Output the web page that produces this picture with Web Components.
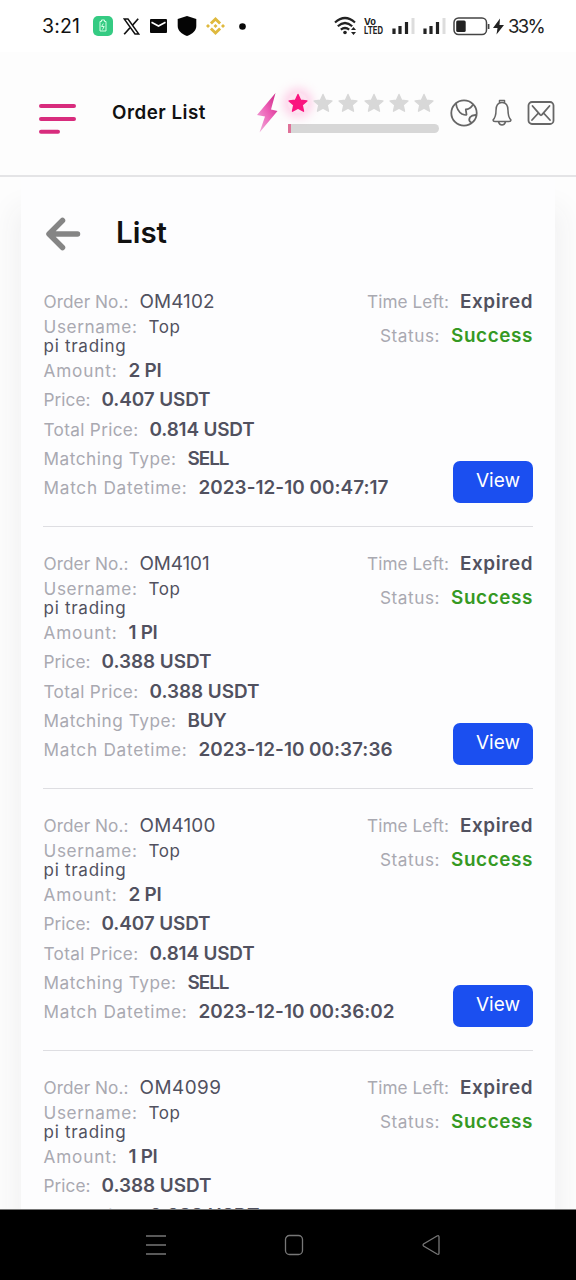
<!DOCTYPE html>
<html lang="en"><head><meta charset="utf-8"><title>Order List</title>
<style>html,body{margin:0;height:100%;overflow:hidden}body{font-family:Inter,"Open Sans",sans-serif;background:#fdfdfd}</style></head>
<body><order-app></order-app>
<script>
const define=(name,html,setup)=>customElements.define(name,class extends HTMLElement{
  connectedCallback(){
    if(this.shadowRoot)return;
    this.attachShadow({mode:'open'}).innerHTML=html;
    if(setup)setup(this,this.shadowRoot);
  }
});

/* One line of text whose tracking is adjusted to fill the width given in "w". */
customElements.define('track-text',class extends HTMLElement{
  connectedCallback(){
    if(this.shadowRoot)return;
    const r=this.attachShadow({mode:'open'});
    r.innerHTML='<style>:host{display:block;flex:none;white-space:pre}span{display:inline-block}</style><span><slot></slot></span>';
    const s=r.querySelector('span'),w=+this.getAttribute('w');
    this.style.width=w+'px';
    s.style.letterSpacing=(w-s.getBoundingClientRect().width)/this.textContent.length+'px';
  }
});

define('status-bar',`<style>
:host{display:flex;align-items:center;height:52px;background:#fff;color:#111;box-sizing:border-box;padding:0 32px 0 42px;font-size:19.5px}
svg{display:block;flex:none}.r{margin-left:auto;display:flex;align-items:center;color:#222}</style>
<track-text w="38">3:21</track-text>
<svg style="margin-left:13px" width="20" height="20" viewBox="0 0 20 20"><rect width="20" height="20" rx="5" fill="#35cb83"/><path d="M7 5.500h1.500v-1.500h3v1.500H13v9.500H7zM10.300 7.500l-1.700 3h2.600l-1.700 3" fill="none" stroke="#d4ffe4" stroke-width="1"/></svg>
<svg style="margin-left:10px" width="17" height="17" viewBox="0 0 17 17"><path d="M1.200 1h3.800l10.800 15h-3.800z" fill="#fff" stroke="#111" stroke-width="1.500"/><path d="M15.200.7 9.500 7.200M7 9.700 1.200 16.300" stroke="#111" stroke-width="1.700"/></svg>
<svg style="margin-left:10px" width="17" height="14" viewBox="0 0 17 14"><rect width="17" height="14" rx="1" fill="#080808"/><path d="m1.500 3.200 7 3.800 7-3.800" fill="none" stroke="#fff" stroke-width="1.600"/></svg>
<svg style="margin-left:10px" width="20" height="20" viewBox="0 0 20 20"><path d="M10 0 19.300 3v7c0 4.800-4 8.200-9.300 10C4.700 18.200.7 14.800.7 10V3z" fill="#050505"/></svg>
<svg style="margin-left:9px" width="19" height="20" viewBox="0 0 19 20"><g fill="#dfb93e"><path d="m9.500 1 5.600 5.600-2 2-3.600-3.500-3.600 3.500-2-2zM9.500 19l5.600-5.600-2-2-3.600 3.500-3.600-3.500-2 2zM9.500 8l2 2-2 2-2-2zM2 8l2 2-2 2-2-2zM17 8l2 2-2 2-2-2z"/></g></svg>
<svg style="margin-left:14px" width="7" height="7"><circle cx="3.500" cy="3.500" r="3.300" fill="#080808"/></svg>
<div class="r">
<svg width="24" height="20" viewBox="0 0 24 20"><g fill="none" stroke="#222" stroke-width="2.200"><path d="M1 6.500q10-9 20 0M3.800 10.200q7.200-6.400 14.400 0M6.800 13.700q4.200-3.400 8.400 0"/></g><circle cx="11" cy="16.500" r="1.800" fill="#222"/><path d="m17 14 2.500-3 2.500 3zM17 16h5l-2.500 3z" fill="#222"/></svg>
<svg style="margin-left:6px;overflow:visible" width="20" height="20" viewBox="0 0 20 20" font-family="Inter,sans-serif" font-weight="700" fill="#222"><text x="0" y="8.500" font-size="9.500" textLength="12" lengthAdjust="spacingAndGlyphs">Vo</text><text x="0" y="17.500" font-size="10" textLength="19" lengthAdjust="spacingAndGlyphs">LTED</text></svg>
<svg style="margin-left:8px" width="54" height="18" viewBox="0 0 54 18"><path d="M2 17v-5.500M8 17v-8M14.500 17v-12M33 17v-5.500M39 17v-8M45.500 17v-12" stroke="#222" stroke-width="3.200"/><path d="M21 17V1M52 17V1" stroke="#ddd" stroke-width="3"/></svg>
<svg style="margin-left:7px" width="37" height="19" viewBox="0 0 37 19"><rect x="1" y="1" width="32.500" height="16.500" rx="4.500" fill="none" stroke="#444" stroke-width="1.500"/><rect x="3.200" y="3.500" width="9.500" height="11.500" rx="1.500" fill="#222"/><path d="M35.600 7v5" stroke="#444" stroke-width="1.700"/></svg>
<svg style="margin:0 4px 0 3px" width="11" height="17" viewBox="0 0 11 17"><path d="M7 .5 0 10h4.500L3.500 16.500 11 7H6.500z" fill="#222"/></svg>
<track-text w="36" style="font-size:18.500px">33%</track-text></div>`);

define('star-rating',`<style>:host{display:block;width:151px}.s{display:flex;gap:5.200px;height:20px}svg{display:block;overflow:visible}
.on{border-radius:50%;box-shadow:0 0 10px 5px #ff9fd170;background:#ffa8d650}
.b{height:9px;margin-top:10.500px;background:linear-gradient(90deg,#df7299 3px,#d7d7d7 3px);border-radius:0 5px 5px 0}</style><div class="s"></div><div class="b"></div>`,
(h,r)=>{r.querySelector('.s').innerHTML=Array.from({length:6},(_,i)=>`<svg ${i?'':'class="on"'} width="20" height="20" viewBox="0 0 20 20"><path d="m10 1.500 2.600 5.700 6.300.7-4.700 4.200 1.300 6.100-5.500-3.100-5.500 3.100 1.300-6.100L1.100 7.900l6.300-.7z" fill="${i?'#d8d8d8':'#fa147f'}" stroke="${i?'#d8d8d8':'#fa147f'}" stroke-width="1.400" stroke-linejoin="round"/></svg>`).join('');});

define('app-header',`<style>
:host{display:flex;align-items:flex-start;height:125px;box-sizing:border-box;border-bottom:2px solid #e4e4e6;background:#fdfdfd;padding:41px 20px 0 38px}
svg{display:block;flex:none}track-text{font-size:18.800px;font-weight:600;line-height:24px;color:#111;margin:8px 0 0 36px}star-rating{margin-left:10px;flex:none}
.i{fill:none;stroke:#666;stroke-width:1.800;stroke-linejoin:round;stroke-linecap:round}</style>
<svg style="margin-top:9px" width="38" height="34" viewBox="0 0 38 34"><path d="M3 4h33M3 17h33M3 29.700h17" stroke="#d82c7d" stroke-width="4" stroke-linecap="round"/></svg>
<track-text w="94">Order List</track-text>
<svg style="margin-left:51px" width="21" height="40" viewBox="0 0 21 40"><defs><linearGradient id="g" x1="1" y1="0" x2="0" y2="1"><stop stop-color="#c72381"/><stop offset=".45" stop-color="#ed5db5"/><stop offset="1" stop-color="#f0b5df"/></linearGradient></defs><path d="M18.500 0 0 22l8 1.500L2.500 39.500 20.500 18l-6.500-1.500z" fill="url(#g)"/></svg>
<star-rating></star-rating>
<svg class="i" style="margin:5px 0 0 10px" width="30" height="30" viewBox="0 0 30 30"><circle cx="15" cy="15" r="12.700"/><path d="M7 5.500q1 7.500 6 10.500 4 1.500 4.500.5l-.7-5q4-.2 7-4.500M27 17q-4-.2-6 2.300-2 3.700 1.300 5.200"/></svg>
<svg class="i" style="margin:6px 0 0 12px;stroke-width:1.500" width="22" height="29" viewBox="0 0 22 29"><path d="M8.500 3.500V1.500h5v2M11 3.500q-6 0-6 8 0 6.500-3 9.500.1 1.500 2 1.500h14q1.900 0 2-1.500-3-3-3-9.500 0-8-6-8zM7.500 23q1 3 3.500 3t3.500-3"/></svg>
<svg class="i" style="margin:7px 0 0 14px" width="28" height="26" viewBox="0 0 28 26"><rect x="1.500" y="2" width="25" height="22" rx="3.500"/><path d="m5.500 6 7.500 8.700q1 1 2 0L22.500 6M5 20l6-6.500M23 20l-6-6.500"/></svg>`);

define('view-button',`<style>:host{display:block;width:80px;height:42px;border-radius:7px;background:#1b4ff0;color:#fff;box-sizing:border-box;padding:0 0 0 23px;font-size:19px;line-height:40.500px}</style><track-text w="45.500"><slot></slot></track-text>`,
(h,r)=>{const t=r.querySelector('track-text');t.textContent=h.textContent;});
customElements.define('field-row',class extends HTMLElement{
  connectedCallback(){
    if(this.shadowRoot)return;
    const a=n=>this.getAttribute(n);
    this.attachShadow({mode:'open'}).innerHTML=`<style>:host{display:flex;align-items:baseline;gap:11px;height:29.300px;line-height:29.300px;font-size:17.200px;color:#a9a9b1}
    .v{font-size:18.900px;font-weight:600;color:#51515f}:host([plain]) .v{font-weight:400}:host([small]) .v{font-size:17px;font-weight:400}
    :host([small]){line-height:20px;height:20px}:host([good]) .v{color:#359923}</style><track-text w="${a('lw')}">${a('label')}</track-text><track-text class="v" w="${a('vw')}">${a('value')}</track-text>`;
  }
});
customElements.define('order-item',class extends HTMLElement{
  connectedCallback(){
    if(this.shadowRoot)return;
    const [no,nw,amt,aw,price,pw,total,tw,type,yw,date,dw]=this.getAttribute('data').split('|');
    this.attachShadow({mode:'open'}).innerHTML=`<style>:host{display:flex;height:262px;box-sizing:border-box;padding-top:22px;border-bottom:1px solid #dedee2;margin:0 22px}
    .lt{flex:1;min-width:0;padding-left:.5px}.rt{flex:none;display:flex;flex-direction:column;align-items:flex-end}.first{height:30px}.u{font-size:17px;line-height:19px;color:#51515f}
    .st{margin-top:5px}view-button{margin-top:110.500px}</style>
    <div class="lt"><field-row class="first" plain label="Order No.:" lw="85" value="${no}" vw="${nw}"></field-row>
    <field-row small label="Username:" lw="94" value="Top" vw="32"></field-row><track-text class="u" w="83">pi trading</track-text>
    <field-row label="Amount:" lw="74" value="${amt}" vw="${aw}"></field-row>
    <field-row label="Price:" lw="47" value="${price}" vw="${pw}"></field-row>
    <field-row label="Total Price:" lw="95" value="${total}" vw="${tw}"></field-row>
    ${date?`<field-row label="Matching Type:" lw="133" value="${type}" vw="${yw}"></field-row>
    <field-row label="Match Datetime:" lw="144" value="${date}" vw="${dw}"></field-row>`:''}</div>
    <div class="rt"><field-row label="Time Left:" lw="82" value="Expired" vw="73"></field-row><field-row class="st" good label="Status:" lw="60" value="Success" vw="82"></field-row>${date?'<view-button>View</view-button>':''}</div>`;
  }
});
define('order-card',`<style>:host{display:block;margin:0 21px;background:#fdfdfe;min-height:1100px;box-shadow:0 38px 26px 8px #f2f2f3}
header{display:flex;align-items:center;height:88px;padding:0 0 0 24px;box-sizing:border-box}svg{display:block}track-text{font-size:29.500px;font-weight:600;color:#111;line-height:36px;margin:22px 0 0 35px}svg{margin-top:25px}</style>
<header><svg width="36" height="34" viewBox="0 0 36 34"><path d="M17.500 3.500 4 17l13.500 13.500M5 17h27.500" fill="none" stroke="#858585" stroke-width="5.500" stroke-linecap="round" stroke-linejoin="round"/></svg><track-text w="51">List</track-text></header><slot></slot>`);
define('nav-bar',`<style>:host{display:flex;align-items:center;justify-content:space-between;height:71px;background:#000;border-top:1px solid #777;box-sizing:border-box;padding:0 134px 0 145px}svg{display:block;fill:none;stroke:#777;stroke-width:1.300}</style>
<svg width="22" height="22"><path d="M1 2h20M1 11h20M1 20h20"/></svg><svg width="22" height="22"><rect x="2.500" y="1.500" width="17" height="19" rx="4"/></svg><svg width="22" height="22"><path d="M19 3v16q0 2-2 1L3.500 12q-1-1 0-2L17 2q2-1 2 1z"/></svg>`);
define('order-app',`<style>:host{display:flex;flex-direction:column;height:1280px;width:576px}main{flex:1;min-height:0;overflow:hidden}</style>
<status-bar></status-bar><app-header></app-header><main><order-card>
<order-item data="OM4102|75|2 PI|33|0.407 USDT|109|0.814 USDT|105|SELL|41|2023-12-10 00:47:17|190"></order-item>
<order-item data="OM4101|70|1 PI|29|0.388 USDT|110|0.388 USDT|110|BUY|39|2023-12-10 00:37:36|194"></order-item>
<order-item data="OM4100|76|2 PI|33|0.407 USDT|109|0.814 USDT|105|SELL|41|2023-12-10 00:36:02|196"></order-item>
<order-item data="OM4099|82|1 PI|29|0.388 USDT|110|0.388 USDT|110"></order-item>
</order-card></main><nav-bar></nav-bar>`);
</script></body></html>
